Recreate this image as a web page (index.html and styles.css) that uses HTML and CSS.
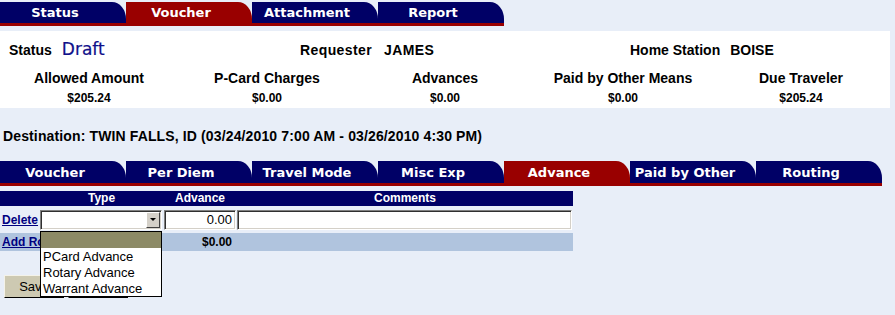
FILE: index.html
```html
<!DOCTYPE html>
<html>
<head>
<meta charset="utf-8">
<link rel="stylesheet" href="styles.css">
</head>
<body>
<div class="tabs top">
  <div class="tab">Status</div>
  <div class="tab active">Voucher</div>
  <div class="tab">Attachment</div>
  <div class="tab">Report</div>
</div>

<div class="summary">
  <div class="sum-row1">
    <div class="pair"><span class="lbl">Status</span><span class="draft">Draft</span></div>
    <div class="pair wide"><span class="lbl">Requester</span><span class="lbl">JAMES</span></div>
    <div class="pair"><span class="lbl">Home Station</span><span class="lbl">BOISE</span></div>
  </div>
  <div class="sum-labels">
    <div>Allowed Amount</div>
    <div>P-Card Charges</div>
    <div>Advances</div>
    <div>Paid by Other Means</div>
    <div>Due Traveler</div>
  </div>
  <div class="sum-values">
    <div>$205.24</div>
    <div>$0.00</div>
    <div>$0.00</div>
    <div>$0.00</div>
    <div>$205.24</div>
  </div>
</div>

<div class="destination">Destination: TWIN FALLS, ID (03/24/2010 7:00 AM - 03/26/2010 4:30 PM)</div>

<div class="tabs sub">
  <div class="tab">Voucher</div>
  <div class="tab">Per Diem</div>
  <div class="tab">Travel Mode</div>
  <div class="tab">Misc Exp</div>
  <div class="tab active">Advance</div>
  <div class="tab">Paid by Other</div>
  <div class="tab">Routing</div>
</div>

<div class="grid">
  <div class="hdr"></div>
  <div class="hdr">Type</div>
  <div class="hdr">Advance</div>
  <div class="hdr">Comments</div>

  <div class="cell c0"><a class="link" href="#">Delete</a></div>
  <div class="cell"><div class="select"><span class="arrow"></span></div></div>
  <div class="cell"><div class="field amount">0.00</div></div>
  <div class="cell"><div class="field comments"></div></div>

  <div class="tot c0"><a class="link" href="#">Add Row</a></div>
  <div class="tot"></div>
  <div class="tot sum">$0.00</div>
  <div class="tot"></div>
</div>

<div class="buttons">
  <button class="btn">Save</button>
  <button class="btn">Cancel</button>
</div>

<div class="droplist">
  <div class="opt sel">&nbsp;</div>
  <div class="opt">PCard Advance</div>
  <div class="opt">Rotary Advance</div>
  <div class="opt">Warrant Advance</div>
</div>
</body>
</html>
```

FILE: styles.css
```css
body {
  margin: 0;
  width: 895px;
  height: 315px;
  overflow: hidden;
  position: relative;
  background: #e8eef8;
  font-family: "Liberation Sans", Arial, sans-serif;
  color: #000;
}

.tabs {
  display: flex;
  border-bottom: 3px solid #990000;
}
.tabs.top {
  width: 504px;
  margin-top: 2px;
}
.tabs.top .tab { height: 21px; }
.tabs.sub {
  width: 882px;
  margin-top: 16px;
}
.tabs.sub .tab { height: 22px; }

.tab {
  width: 126px;
  box-sizing: border-box;
  padding-right: 16px;
  background: #000066;
  color: #fff;
  font: bold 13px "DejaVu Sans", Verdana, sans-serif;
  border-top-right-radius: 14px 17px;
  display: flex;
  align-items: center;
  justify-content: center;
  white-space: nowrap;
}
.tab.active { background: #990000; }

.summary {
  width: 890px;
  height: 77px;
  margin-top: 5px;
  background: #fff;
  box-sizing: border-box;
  padding-top: 8px;
}
.sum-row1 {
  display: grid;
  grid-template-columns: 291px 330px 1fr;
  padding-left: 9px;
  height: 20px;
  align-items: baseline;
}
.pair {
  display: flex;
  align-items: baseline;
  gap: 10px;
}
.pair.wide { gap: 12px; }
.pair.wide .lbl { letter-spacing: 0.4px; }
.lbl {
  font-weight: bold;
  font-size: 14px;
  line-height: 20px;
}
.draft {
  font-family: "DejaVu Sans", Verdana, sans-serif;
  font-size: 17px;
  color: #10108a;
  line-height: 20px;
  -webkit-text-stroke: 0.2px #10108a;
}
.sum-labels, .sum-values {
  display: grid;
  grid-template-columns: repeat(5, 178px);
  text-align: center;
  font-weight: bold;
}
.sum-labels {
  margin-top: 10px;
  font-size: 14px;
  line-height: 18px;
}
.sum-values {
  margin-top: 2px;
  font-size: 12px;
  line-height: 18px;
}

.destination {
  margin-top: 19px;
  margin-left: 3px;
  font-weight: bold;
  font-size: 14px;
  line-height: 18px;
  letter-spacing: 0.13px;
}

.grid {
  width: 573px;
  margin-top: 5px;
  display: grid;
  grid-template-columns: 40px 123px 74px 1fr;
  grid-template-rows: 15px 27px 18px;
}
.hdr {
  background: #000066;
  color: #fff;
  font-weight: bold;
  font-size: 12px;
  line-height: 15px;
  text-align: center;
}
.cell {
  display: flex;
  align-items: center;
}
.c0 {
  padding-left: 2px;
  white-space: nowrap;
}
.link {
  color: #000080;
  font-weight: bold;
  font-size: 12px;
  text-decoration: underline;
}
.tot {
  background: #b0c4de;
  display: flex;
  align-items: center;
  font-weight: bold;
  font-size: 12px;
}
.tot.sum {
  justify-content: flex-end;
  padding-right: 5px;
}

.select, .field {
  height: 20px;
  box-sizing: border-box;
  background: #fff;
  border: 1px solid;
  border-color: #808080 #fff #fff #808080;
  box-shadow: inset 1px 1px #303030, inset -1px -1px #d4d0c8;
}
.select {
  width: 122px;
  position: relative;
  display: flex;
  justify-content: flex-end;
  align-items: stretch;
  padding: 1px;
}
.arrow {
  width: 14px;
  background: #d4d0c8;
  box-sizing: border-box;
  border: 1px solid;
  border-color: #fff #404040 #404040 #fff;
  display: flex;
  align-items: center;
  justify-content: center;
}
.arrow::after {
  content: "";
  border-left: 3px solid transparent;
  border-right: 3px solid transparent;
  border-top: 3px solid #000;
}
.field.amount {
  width: 72px;
  margin-left: 1px;
  font-size: 13px;
  text-align: right;
  padding-right: 3px;
  line-height: 18px;
}
.field.comments {
  width: 335px;
}

.buttons {
  display: flex;
  gap: 4px;
  margin-top: 24px;
  margin-left: 4px;
}
.btn {
  width: 60px;
  height: 23px;
  background: #cdc9b2;
  border: 1px solid;
  border-color: #f4f2e8 #000 #000 #f4f2e8;
  font-family: "Liberation Sans", Arial, sans-serif;
  font-size: 13px;
  padding: 0;
  color: #000;
}

.droplist {
  position: absolute;
  left: 40px;
  top: 231px;
  width: 122px;
  box-sizing: border-box;
  border: 1px solid #000;
  background: #fff;
}
.opt {
  height: 16px;
  line-height: 17px;
  font-size: 13px;
  padding-left: 2px;
  color: #000;
}
.opt.sel {
  background: #8c8a66;
  height: 16px;
}
```
